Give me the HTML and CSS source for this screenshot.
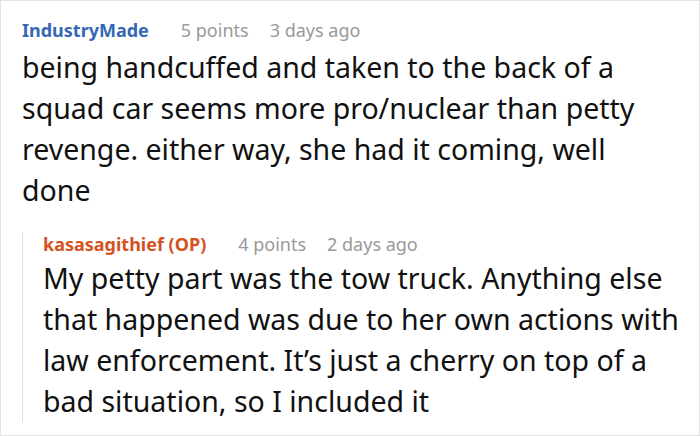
FILE: index.html
```html
<!DOCTYPE html>
<html>
<head>
<meta charset="utf-8">
<link rel="stylesheet" href="styles.css">
</head>
<body>
<div class="frame">
  <div class="comment">
    <div class="meta">
      <span class="author">IndustryMade</span>
      <span class="points">5 points</span>
      <span class="time">3 days ago</span>
    </div>
    <p class="text">being handcuffed and taken to the back of a squad car seems more pro/nuclear than petty revenge. either way, she had it coming, well done</p>
    <div class="reply">
      <div class="meta reply-meta">
        <span class="author op">kasasagithief (OP)</span>
        <span class="points">4 points</span>
        <span class="time">2 days ago</span>
      </div>
      <p class="text reply-text">My petty part was the tow truck. Anything else that happened was due to her own actions with law enforcement. It’s just a cherry on top of a bad situation, so I included it</p>
    </div>
  </div>
</div>
</body>
</html>
```
FILE: styles.css
```css
html, body {
  margin: 0;
  padding: 0;
  background: #fff;
}
.frame {
  width: 700px;
  height: 436px;
  box-sizing: border-box;
  border: 1px solid #e2e2e2;
  padding: 17px 18px 0 21px;
  overflow: hidden;
  font-family: "Noto Sans", "Open Sans", sans-serif;
  color: #111;
}
.meta {
  display: flex;
  align-items: baseline;
  font-size: 18px;
  line-height: 24px;
  margin-bottom: 5px;
}
.author {
  font-weight: 700;
  color: #3468b5;
}
.author.op {
  color: #d4521d;
}
.points {
  color: #999;
  margin-left: 32px;
}
.time {
  color: #999;
  margin-left: 21px;
}
.text {
  margin: 0;
  font-size: 28.5px;
  line-height: 41px;
}
.reply {
  margin-top: 31px;
  border-left: 1px solid #e0e0e0;
  padding-left: 20px;
}
.reply-meta {
  margin-top: -10px;
  margin-bottom: 2px;
}
.reply-text {
  margin-bottom: -5px;
}
```
